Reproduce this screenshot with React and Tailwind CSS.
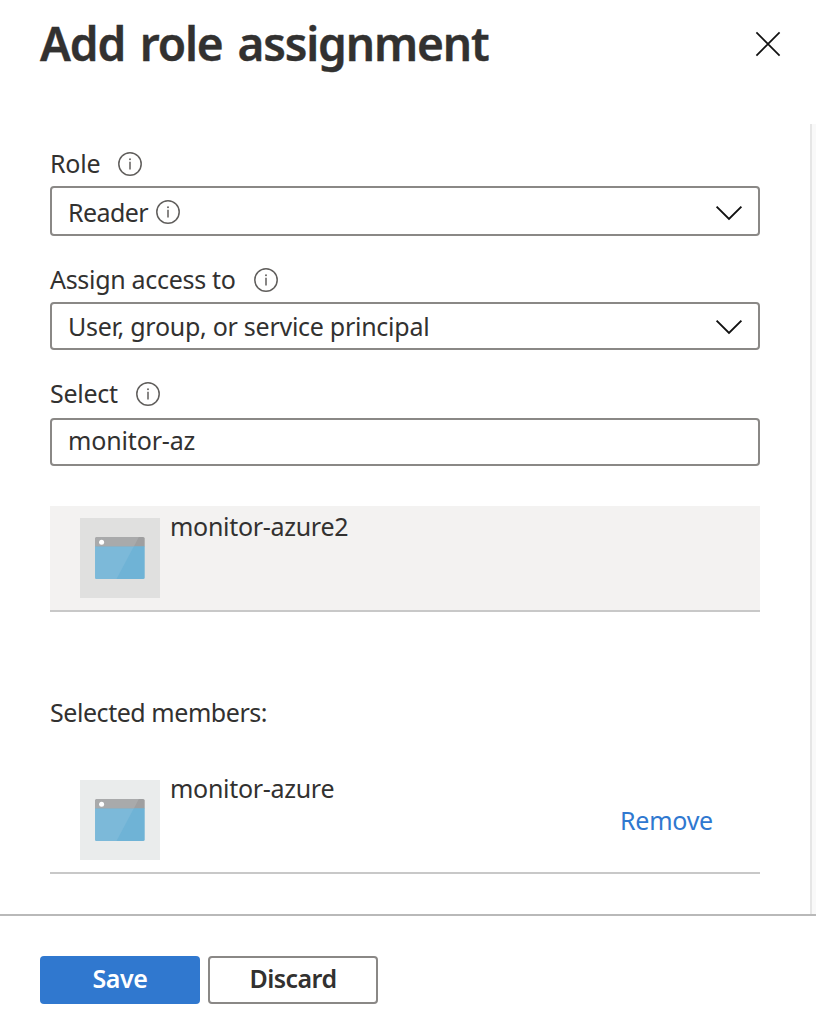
function InfoIcon({ className }) {
  return (
    <svg viewBox="0 0 24 24" className={`h-6 w-6 shrink-0 ${className}`} fill="none">
      <circle cx="12" cy="12" r="11.2" stroke="#605e5c" strokeWidth="1.5" />
      <path d="M12 9.8V17.4" stroke="#605e5c" strokeWidth="1.5" />
      <circle cx="12" cy="7.2" r="0.95" fill="#605e5c" />
    </svg>
  );
}

function ChevronIcon() {
  return (
    <svg viewBox="0 0 28 16" className="relative top-px h-4 w-7 shrink-0" fill="none">
      <path d="M1.6 1.6L14 14L26.4 1.6" stroke="#111" strokeWidth="1.9" />
    </svg>
  );
}

function CloseIcon() {
  return (
    <svg viewBox="0 0 26 26" className="h-[26px] w-[26px]" fill="none">
      <path d="M1.4 1.4L24.6 24.6M24.6 1.4L1.4 24.6" stroke="#111" strokeWidth="1.7" />
    </svg>
  );
}

function AppTile({ className }) {
  return (
    <svg viewBox="0 0 80 80" className={`h-20 w-20 shrink-0 ${className}`}>
      <path d="M15.2 28H64.7V59.4Q64.7 61 63.1 61H16.8Q15.2 61 15.2 59.4Z" fill="#6fb3d6" />
      <path d="M15.2 28H54L36.5 61H16.8Q15.2 61 15.2 59.4Z" fill="#7cb9d9" />
      <path d="M16.8 19H63.1Q64.7 19 64.7 20.6V28.2H15.2V20.6Q15.2 19 16.8 19Z" fill="#9f9fa0" />
      <path d="M16.8 19H58.8L54 28.2H15.2V20.6Q15.2 19 16.8 19Z" fill="#a9aaab" />
      <circle cx="21.6" cy="24.2" r="2.5" fill="#fff" />
    </svg>
  );
}

function Label({ children, className, gap }) {
  return (
    <div className="flex h-8 items-center">
      <span className={`relative -top-px ${className}`}>{children}</span>
      <InfoIcon className={gap} />
    </div>
  );
}

export default function App() {
  return (
    <div className="flex h-[1034px] w-[816px] flex-col overflow-hidden bg-white font-['Noto_Sans','Open_Sans',sans-serif] text-[25px] leading-8 text-[#323130]">
      <header className="flex h-[124px] items-start justify-between pr-[35px] pl-10">
        <h1 className="mt-[11px] text-[46px] leading-[64px] font-semibold tracking-[-1.15px] whitespace-nowrap [-webkit-text-stroke:0.4px_#323130] [word-spacing:4px]">
          Add role assignment
        </h1>
        <button className="mt-[31px]" aria-label="Close">
          <CloseIcon />
        </button>
      </header>

      <div className="flex h-[790px]">
        <main className="w-[810px] pt-6 pr-[50px] pl-[50px]">
          <Label className="w-[50px] tracking-[-0.25px]" gap="ml-[18px]">Role</Label>
          <div className="mt-1.5 flex h-[50px] items-center rounded-[4px] border-2 border-[#8a8886] pr-[15px] pl-4">
            <span className="relative top-px w-[80px] tracking-[-0.6px]">Reader</span>
            <InfoIcon className="relative top-px ml-2" />
            <span className="relative top-px ml-auto"><ChevronIcon /></span>
          </div>

          <div className="mt-7">
            <Label className="w-[186px] tracking-[-0.3px] whitespace-nowrap" gap="ml-[18px]">Assign access to</Label>
          </div>
          <div className="mt-1.5 flex h-12 items-center justify-between rounded-[4px] border-2 border-[#8a8886] pr-[15px] pl-4">
            <span className="tracking-[-0.27px]">User, group, or service principal</span>
            <ChevronIcon />
          </div>

          <div className="mt-7">
            <Label className="w-[68px] tracking-[-0.3px]" gap="ml-[18px]">Select</Label>
          </div>
          <div className="mt-2 flex h-12 items-center rounded-[4px] border-2 border-[#8a8886] pl-4">
            <span className="relative -top-0.5 tracking-[-0.15px]">monitor-az</span>
          </div>

          <div className="mt-10 flex h-[106px] border-b-2 border-[#c8c8c8] bg-[#f3f2f1] pt-3 pl-[30px]">
            <AppTile className="bg-[#e0e0df]" />
            <span className="-mt-2 ml-2.5 tracking-[-0.3px]">monitor-azure2</span>
          </div>

          <p className="mt-[84px] tracking-[-0.45px]">Selected members:</p>

          <div className="mt-10 flex h-[106px] border-b-2 border-[#c8c8c8] pt-3 pr-[47px] pl-[30px]">
            <AppTile className="bg-[#eaecec]" />
            <span className="-mt-2 ml-2.5 tracking-[-0.3px]">monitor-azure</span>
            <a className="mt-6 ml-auto w-[93px] tracking-[-0.25px] text-[#2f78d0]">Remove</a>
          </div>
        </main>
        <div className="w-1.5 border-l-2 border-[#e6e6e6] bg-[#f9f9f9]" />
      </div>

      <footer className="flex h-[120px] gap-2 border-t-2 border-[#b9b9b9] pt-10 pl-10 font-semibold">
        <button className="flex h-12 w-40 justify-center rounded-[4px] bg-[#3078cf] pt-1.5 tracking-[-0.4px] text-white">
          Save
        </button>
        <button className="flex h-12 w-[170px] justify-center rounded-[4px] border-2 border-[#8a8886] pt-1 tracking-[-0.55px]">
          Discard
        </button>
      </footer>
    </div>
  );
}
